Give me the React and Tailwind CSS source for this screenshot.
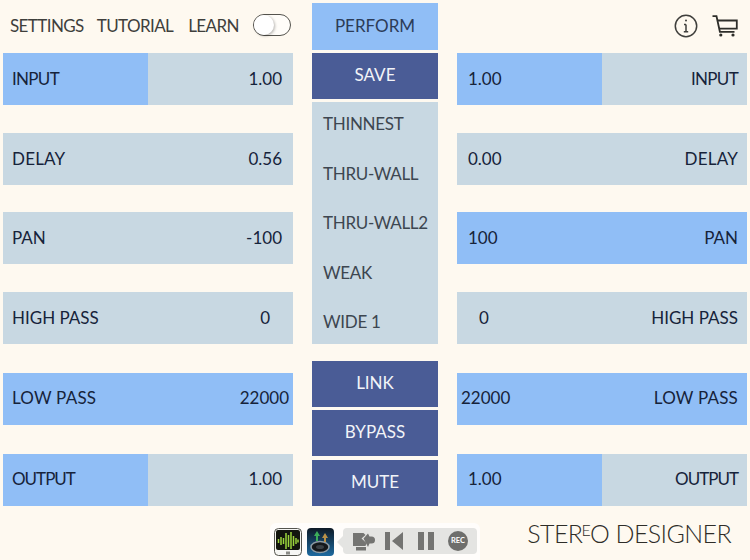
const rows = [
  { label: "INPUT", left: "1.00", right: "1.00", top: "mt-0", leftFill: "half", rightFill: "half", labelClass: "tracking-[-0.7px]" },
  { label: "DELAY", left: "0.56", right: "0.00", top: "mt-[28px]", labelClass: "tracking-[0.2px]" },
  { label: "PAN", left: "-100", right: "100", top: "mt-[27px]", rightFill: "full" },
  { label: "HIGH PASS", left: "0", right: "0", top: "mt-[28px]", zero: true },
  { label: "LOW PASS", left: "22000", right: "22000", top: "mt-[29px]", leftFill: "full", rightFill: "full", wide: true, labelClass: "tracking-[0.2px]", lift: "pb-[3px]" },
  { label: "OUTPUT", left: "1.00", right: "1.00", top: "mt-[29px]", leftFill: "half", rightFill: "half", labelClass: "tracking-[-1px]", lift: "pb-[3px]" },
];

const presets = ["THINNEST", "THRU-WALL", "THRU-WALL2", "WEAK", "WIDE 1"];

const fillClass = (fill) => {
  if (fill === "full") return "w-full";
  if (fill === "half") return "w-1/2";
  return "w-0";
};

const LeftRow = ({ row }) => {
  const valuePad = row.wide ? "pr-[4px]" : row.zero ? "pr-[23px]" : "pr-[11px]";
  return (
    <div className={`relative h-[52px] bg-[#c8d8e2] flex items-center justify-between pl-[9px] ${row.lift || "pb-[2px]"} ${valuePad} ${row.top}`}>
      <div className={`absolute left-0 top-0 h-full bg-[#90bef6] ${fillClass(row.leftFill)}`} />
      <span className={`relative ${row.labelClass || ""}`}>{row.label}</span>
      <span className="relative">{row.left}</span>
    </div>
  );
};

const RightRow = ({ row }) => {
  const valuePad = row.wide ? "pl-[4px]" : row.zero ? "pl-[22px]" : "pl-[11px]";
  return (
    <div className={`relative h-[52px] bg-[#c8d8e2] flex items-center justify-between pr-[9px] ${row.lift || "pb-[2px]"} ${valuePad} ${row.top}`}>
      <div className={`absolute left-0 top-0 h-full bg-[#90bef6] ${fillClass(row.rightFill)}`} />
      <span className="relative">{row.right}</span>
      <span className={`relative ${row.labelClass || ""}`}>{row.label}</span>
    </div>
  );
};

const DarkButton = ({ children, className = "" }) => (
  <div className={`h-[46px] pb-[3px] bg-[#4a5c96] text-[#f2f4f8] flex items-center justify-center ${className}`}>
    {children}
  </div>
);

const InfoIcon = () => (
  <svg width="24" height="24" viewBox="0 0 24 24" fill="none" stroke="#3f3f3c" strokeWidth="1.5">
    <circle cx="12" cy="12" r="10.7" />
    <path d="M12 10.5v7M9.800 17.800h4.400M10 10.500h2" />
    <circle cx="12" cy="6.600" r="1" fill="#3f3f3c" stroke="none" />
  </svg>
);

const CartIcon = () => (
  <svg width="26" height="22" viewBox="0 0 26 22" fill="none" stroke="#2e2e2a" strokeWidth="1.8">
    <path d="M0.500 1.200h4l3.400 15.600h14.600" />
    <path d="M5.400 5.500h19.400v8.200H7.200" />
    <circle cx="8.800" cy="20" r="1.600" fill="#2e2e2a" stroke="none" />
    <circle cx="21" cy="20" r="1.600" fill="#2e2e2a" stroke="none" />
  </svg>
);

const RecorderBar = () => (
  <div className="absolute left-[270px] bottom-0 w-[210px] h-[37px] bg-white/70 rounded-t-[6px] flex items-start pt-[5px] pl-[4px]">
    <svg width="28" height="28" viewBox="0 0 28 28">
      <rect x="0.500" y="0.500" width="27" height="27" rx="4" fill="#f6f6f4" stroke="#55554f" />
      <rect x="2" y="2" width="24" height="20" rx="2" fill="#12150e" />
      <path d="M4.500 11v4M7 9v8M9.500 10v6M12 5v16M14.500 7v12M17 4v17M19.500 8v10M22 10v6M24 11.500v3" stroke="#9bd43c" strokeWidth="1.500" />
      <rect x="12" y="23.500" width="4" height="3" fill="#8a8a86" />
    </svg>
    <svg className="ml-[5px]" width="27" height="28" viewBox="0 0 27 28">
      <defs>
        <linearGradient id="appTile" x1="0" y1="0" x2="0" y2="1">
          <stop offset="0" stopColor="#0e1a26" />
          <stop offset="1" stopColor="#1d6aa0" />
        </linearGradient>
      </defs>
      <rect width="27" height="28" rx="4" fill="url(#appTile)" />
      <ellipse cx="13" cy="19" rx="9" ry="5.500" fill="#15181c" stroke="#8c9aa4" strokeWidth="1.500" />
      <ellipse cx="13" cy="19" rx="4" ry="2" fill="#3a4046" />
      <path d="M10 3l3 5h-2v5H9V8H7z" fill="#3cae5a" />
      <path d="M18 5l3 5h-2v4h-2v-4h-2z" fill="#b89048" />
    </svg>
    <div className="relative ml-[9px] w-[134px] h-[26px] bg-[#e4e4e2] rounded-[4px] flex items-center pl-[10px]">
      <div className="absolute -left-[6px] top-[8px] w-0 h-0 border-y-[6px] border-y-transparent border-r-[6px] border-r-[#e4e4e2]" />
      <svg width="22" height="19" viewBox="0 0 22 19" fill="#747472">
        <path d="M0 1h10.500l2 2-4 3.500 5 4.500-1 3H0z" />
        <path d="M3 15h10v3.500H3z" />
        <path d="M10.500 6.500L15 1.500l1.500 3h2a3.500 3.500 0 0 1 0 7h-2L15 15z" />
      </svg>
      <svg className="ml-[10px]" width="18" height="18" viewBox="0 0 18 18" fill="#747472">
        <path d="M0 0h5v18H0zM18 0v18L7 9z" />
      </svg>
      <svg className="ml-[15px]" width="16" height="18" viewBox="0 0 16 18" fill="#747472">
        <path d="M0 0h6v18H0zM10 0h6v18h-6z" />
      </svg>
      <div className="ml-[14px] w-[20px] h-[20px] rounded-full bg-[#6e6e6c] text-white text-[7.500px] font-bold flex items-center justify-center">
        REC
      </div>
    </div>
  </div>
);

export default function App() {
  return (
    <div className="relative w-[750px] h-[560px] overflow-hidden bg-[#fef9f0] text-[#16233a] text-[17px] leading-none font-['Lato',sans-serif]">
      <div className="flex gap-[19px] pl-[3px] pr-[3px] pt-[3px]">
        <div className="w-[290px]">
          <div className="h-[50px] flex items-center pl-[7px] pb-[6px] text-[#3f3f3c] text-[17px] tracking-[-0.6px]">
            <span>SETTINGS</span>
            <span className="ml-[13px]">TUTORIAL</span>
            <span className="ml-[15px]">LEARN</span>
            <div className="relative ml-[14px] w-[38px] h-[22px] rounded-full border border-[#55544e] bg-[#fffdf9]">
              <div className="absolute left-0 top-0 w-[20px] h-[20px] rounded-full bg-white shadow-[1px_1px_3px_rgba(0,0,0,0.3)]" />
            </div>
          </div>
          {rows.map((row) => (
            <LeftRow key={row.label} row={row} />
          ))}
        </div>

        <div className="w-[126px]">
          <div className="h-[47px] pb-[3px] bg-[#90bef6] text-[#2c3c58] flex items-center justify-center">PERFORM</div>
          <DarkButton className="mt-[3px]">SAVE</DarkButton>
          <div className="mt-[3px] h-[242px] bg-[#c8d8e2] text-[#3d4650] tracking-[-0.3px] flex flex-col pl-[11px] pt-[13px] gap-[32.500px]">
            {presets.map((name) => (
              <div key={name}>{name}</div>
            ))}
          </div>
          <DarkButton className="mt-[17px]">LINK</DarkButton>
          <DarkButton className="mt-[3px]">BYPASS</DarkButton>
          <DarkButton className="mt-[4px]">MUTE</DarkButton>
        </div>

        <div className="w-[290px]">
          <div className="h-[50px] flex items-center justify-end gap-[14px] pr-[9px] pb-[5px]">
            <InfoIcon />
            <CartIcon />
          </div>
          {rows.map((row) => (
            <RightRow key={row.label} row={row} />
          ))}
        </div>
      </div>

      <div className="flex justify-end pr-[19px] pt-[15px] text-[#2e2d28] text-[25px] font-light tracking-[-0.6px]">
        <span>STER</span>
        <span className="text-[16px] -ml-[1px] mt-[1px]">E</span>
        <span>O DESIGNER</span>
      </div>

      <RecorderBar />
    </div>
  );
}
